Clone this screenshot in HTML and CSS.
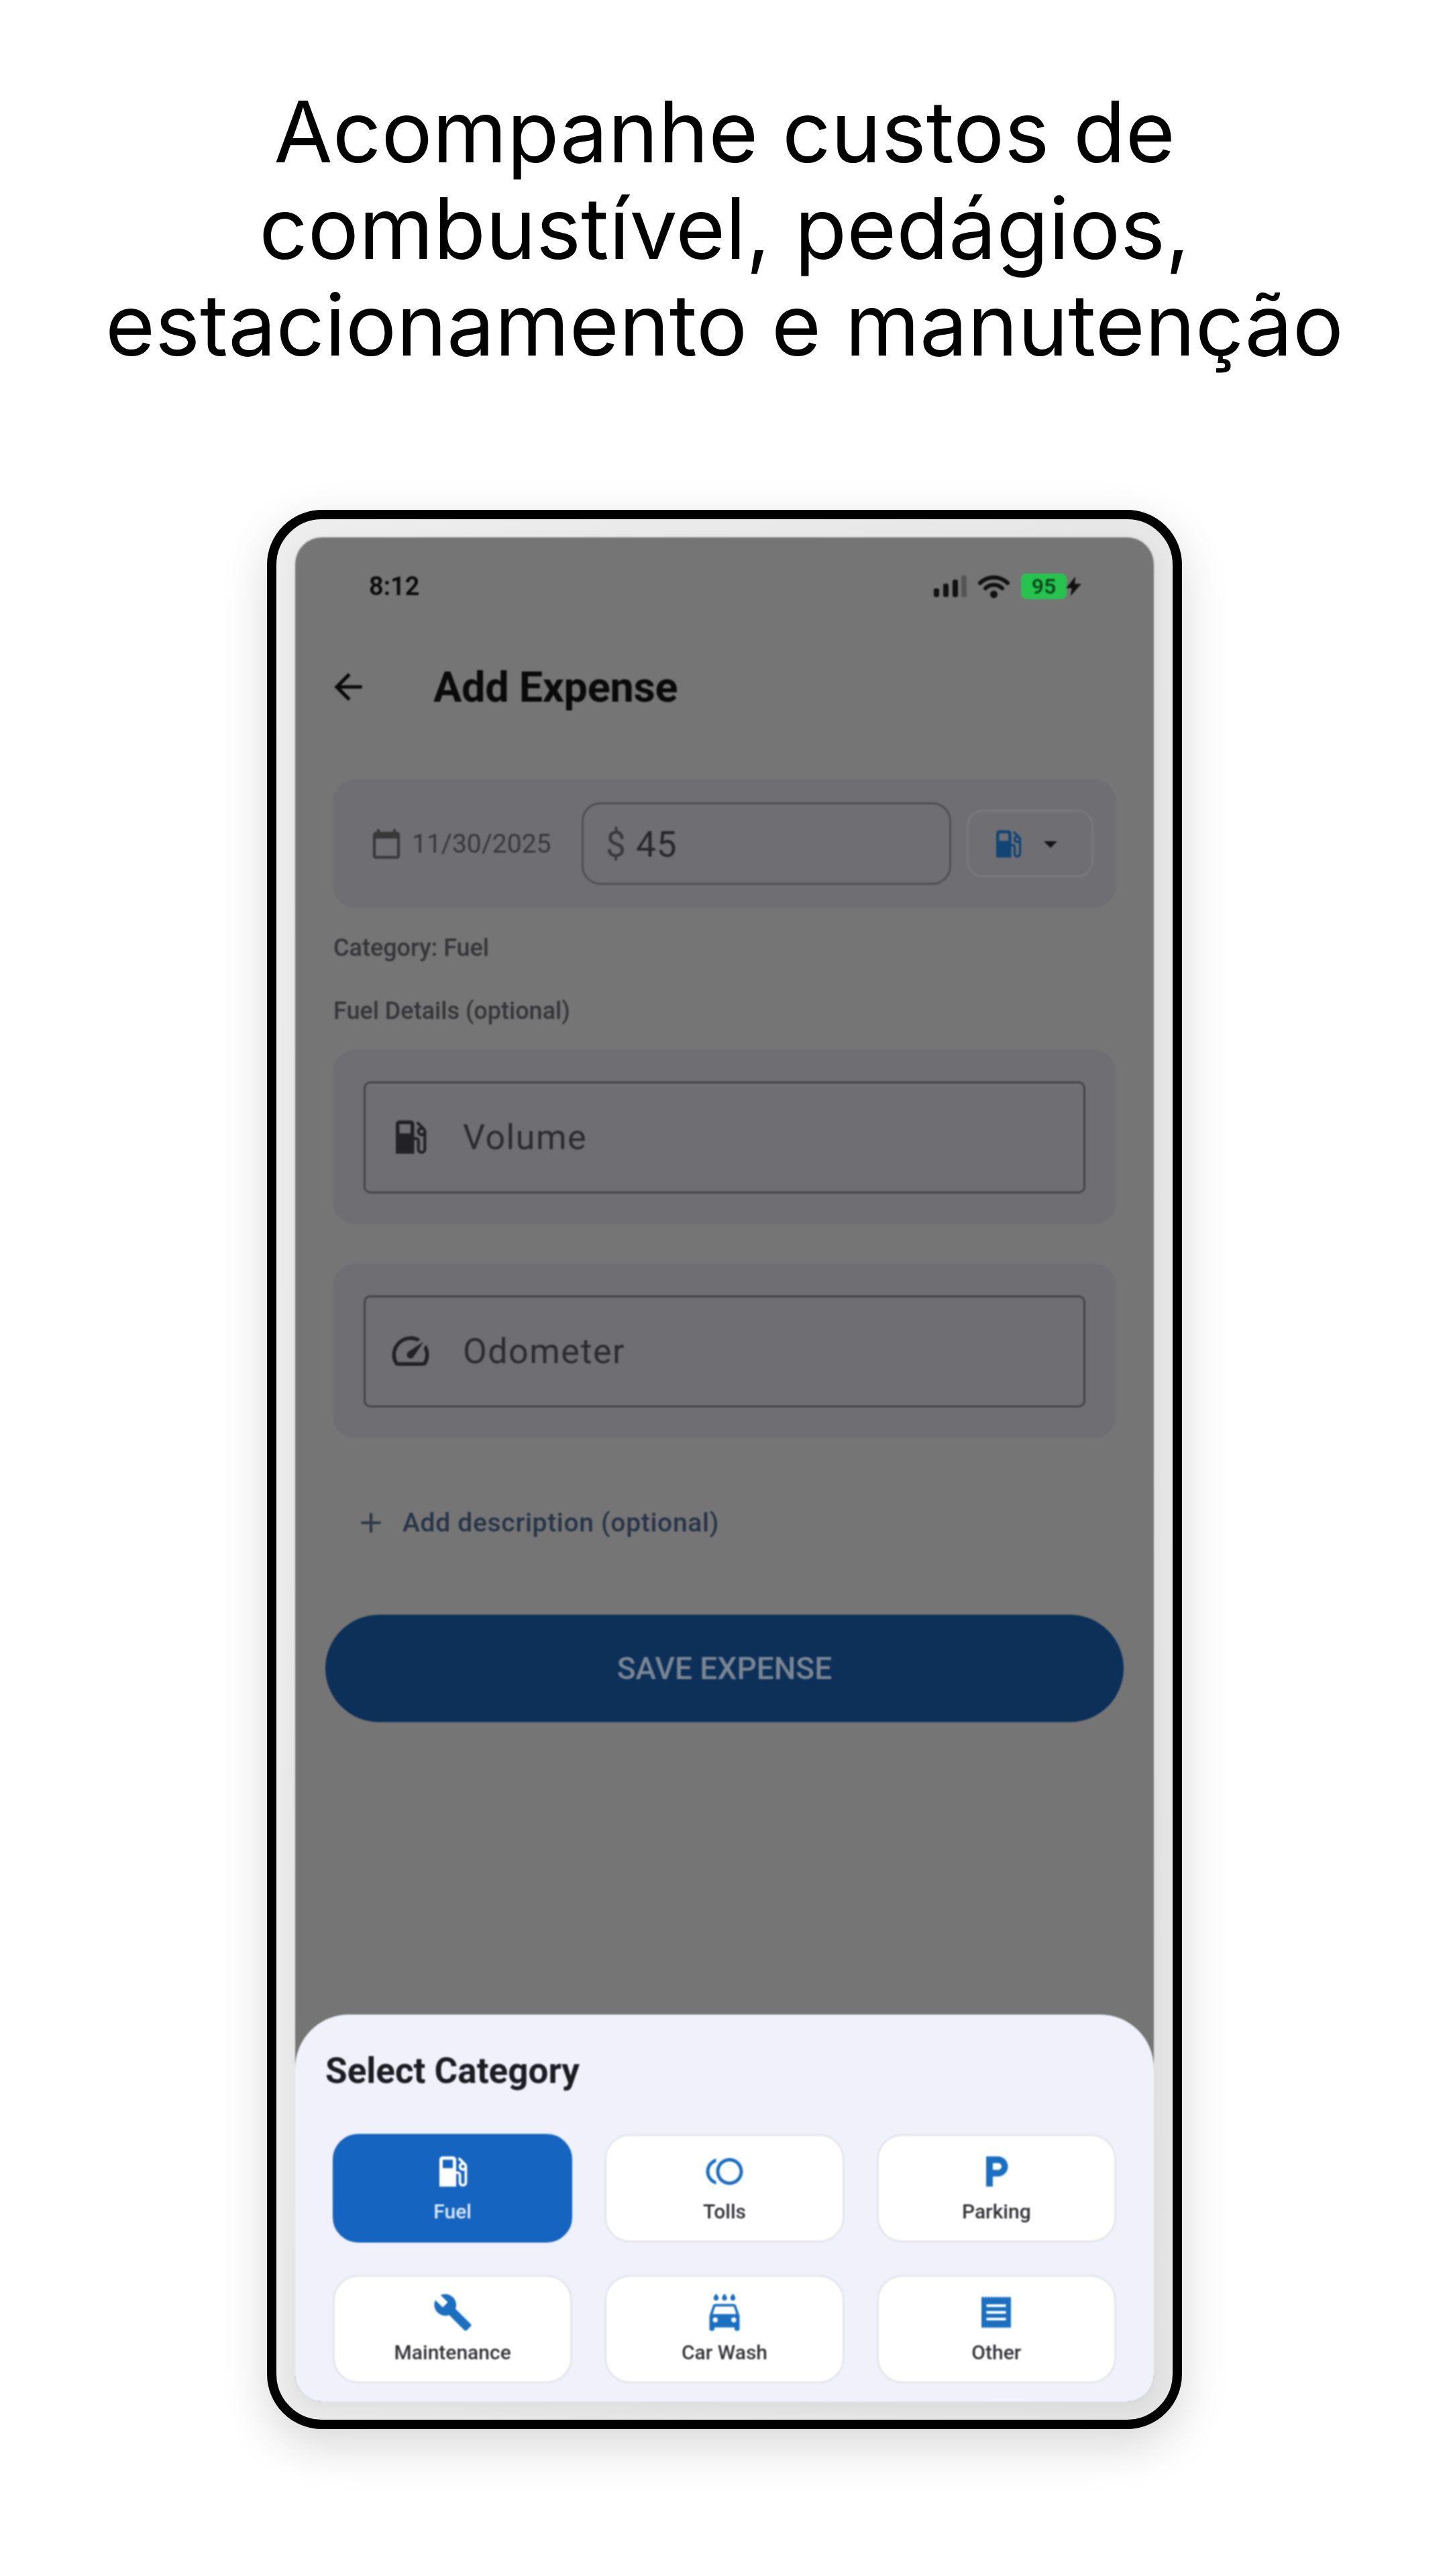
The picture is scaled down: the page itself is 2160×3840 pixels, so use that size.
FILE: index.html

```html
<!DOCTYPE html>
<html lang="pt">
<head>
  <meta charset="UTF-8">
  <title>Add Expense</title>
  <link rel="stylesheet" href="styles.css">
</head>
<body>

  <svg class="sprites" aria-hidden="true">
    <symbol id="i-fuel" viewBox="0 0 24 24"><path fill-rule="evenodd" d="M19.77 7.23l.01-.01-3.72-3.72L15 4.56l2.11 2.11c-.94.36-1.61 1.26-1.61 2.33 0 1.38 1.12 2.5 2.5 2.5.36 0 .69-.08 1-.21v7.21c0 .55-.45 1-1 1s-1-.45-1-1V14c0-1.1-.9-2-2-2h-1V5c0-1.1-.9-2-2-2H6c-1.1 0-2 .9-2 2v16h10v-7.5h1.5v5c0 1.38 1.12 2.5 2.5 2.5s2.5-1.12 2.5-2.5V9c0-.69-.28-1.32-.73-1.77zM12 10H6V5h6v5zm6 0c-.55 0-1-.45-1-1s.45-1 1-1 1 .45 1 1-.45 1-1 1z"/></symbol>
    <symbol id="i-toll" viewBox="0 0 24 24"><path d="M15 4c-4.42 0-8 3.58-8 8s3.58 8 8 8 8-3.58 8-8-3.58-8-8-8zm0 14c-3.31 0-6-2.69-6-6s2.69-6 6-6 6 2.69 6 6-2.69 6-6 6zM3 12c0-2.61 1.67-4.83 4-5.65V4.26C3.55 5.15 1 8.27 1 12s2.55 6.85 6 7.74v-2.09c-2.33-.82-4-3.04-4-5.65z"/></symbol>
    <symbol id="i-parking" viewBox="0 0 24 24"><path d="M13 3H6v18h4v-6h3c3.31 0 6-2.69 6-6s-2.69-6-6-6zm.2 8H10V7h3.2c1.1 0 2 .9 2 2s-.9 2-2 2z"/></symbol>
    <symbol id="i-wrench" viewBox="0 0 24 24"><path d="M22.7 19l-9.1-9.1c.9-2.3.4-5-1.5-6.9-2-2-5-2.4-7.4-1.3L9 6 6 9 1.6 4.7C.4 7.1.9 10.1 2.9 12.1c1.9 1.9 4.6 2.4 6.9 1.5l9.1 9.1c.4.4 1 .4 1.4 0l2.3-2.3c.5-.4.5-1.1.1-1.4z"/></symbol>
    <symbol id="i-carwash" viewBox="0 0 24 24"><path d="M17 5c.83 0 1.5-.67 1.5-1.5 0-1-1.5-2.7-1.5-2.7s-1.5 1.7-1.5 2.7c0 .83.67 1.5 1.5 1.5zm-5 0c.83 0 1.5-.67 1.5-1.5 0-1-1.5-2.7-1.5-2.7s-1.5 1.7-1.5 2.7c0 .83.67 1.5 1.5 1.5zM7 5c.83 0 1.5-.67 1.5-1.5C8.5 2.5 7 .8 7 .8S5.5 2.5 5.5 3.5C5.5 4.33 6.17 5 7 5zm11.92 3.01C18.72 7.42 18.16 7 17.5 7h-11c-.66 0-1.21.42-1.42 1.01L3 14v8c0 .55.45 1 1 1h1c.55 0 1-.45 1-1v-1h12v1c0 .55.45 1 1 1h1c.55 0 1-.45 1-1v-8l-2.08-5.99zM6.5 18c-.83 0-1.5-.67-1.5-1.5S5.67 15 6.5 15s1.5.67 1.5 1.5S7.33 18 6.5 18zm11 0c-.83 0-1.5-.67-1.5-1.5s.67-1.5 1.5-1.5 1.5.67 1.5 1.5-.67 1.5-1.5 1.5zM5 13l1.5-4.5h11L19 13H5z"/></symbol>
    <symbol id="i-receipt" viewBox="0 0 24 24"><path fill-rule="evenodd" d="M3.2 3.2l.88-.6.88.6.88-.6.88.6.88-.6.88.6.88-.6.88.6.88-.6.88.6.88-.6.88.6.88-.6.88.6.88-.6.88.6.88-.6.88.6.88-.6.88.6V20.8l-.88.6-.88-.6-.88.6-.88-.6-.88.6-.88-.6-.88.6-.88-.6-.88.6-.88-.6-.88.6-.88-.6-.88.6-.88-.6-.88.6-.88-.6-.88.6-.88-.6-.88.6-.88-.6zM6.2 7.2h11.6v1.6H6.2zM6.2 11.2h11.6v1.6H6.2zM6.2 15.2h11.6v1.6H6.2z"/></symbol>
    <symbol id="i-speed" viewBox="0 0 24 24"><path d="M20.38 8.57l-1.23 1.85a8 8 0 0 1-.22 7.58H5.07A8 8 0 0 1 15.58 6.85l1.85-1.23A10 10 0 0 0 3.35 19a2 2 0 0 0 1.72 1h13.85a2 2 0 0 0 1.74-1 10 10 0 0 0-.27-10.44zm-9.79 6.84a2 2 0 0 0 2.83 0l5.66-8.49-8.49 5.66a2 2 0 0 0 0 2.83z"/></symbol>
    <symbol id="i-calendar" viewBox="0 0 24 24"><path d="M20 3h-1V1h-2v2H7V1H5v2H4c-1.1 0-2 .9-2 2v16c0 1.1.9 2 2 2h16c1.1 0 2-.9 2-2V5c0-1.1-.9-2-2-2zm0 18H4V8h16v13z"/></symbol>
  </svg>

  <h1 class="headline">Acompanhe custos de<br>combustível, pedágios,<br>estacionamento e manutenção</h1>

  <div class="phone">
    <div class="screen">

      <!-- Status bar -->
      <div class="status-bar">
        <span class="clock">8:12</span>
        <div class="status-icons">
          <svg class="signal" viewBox="0 0 49 32">
            <rect x="0" y="19" width="8" height="13" rx="3"/>
            <rect x="14" y="12" width="8" height="20" rx="3"/>
            <rect x="28" y="6" width="8" height="26" rx="3"/>
            <rect class="signal-off" x="41" y="0" width="8" height="32" rx="3"/>
          </svg>
          <svg class="wifi" viewBox="0 0 47 35">
            <path d="M3 12 C15 1 32 1 44 12" />
            <path d="M11 20 C18 13 29 13 36 20" />
            <circle cx="23.5" cy="29" r="5.5"/>
          </svg>
          <span class="battery">95</span>
          <svg class="bolt" viewBox="0 0 23 27"><path d="M14 0 L1 16 H9 L7 27 L22 10 H13 Z"/></svg>
        </div>
      </div>

      <!-- App bar -->
      <div class="app-bar">
        <svg class="back" viewBox="0 0 24 24"><path d="M20 11H7.83l5.59-5.59L12 4l-8 8 8 8 1.41-1.41L7.83 13H20v-2z"/></svg>
        <span class="app-title">Add Expense</span>
      </div>

      <!-- Date, amount, category -->
      <div class="card amount-card">
        <svg class="date-icon"><use href="#i-calendar"/></svg>
        <span class="date">11/30/2025</span>
        <div class="amount"><span class="currency">$</span> 45</div>
        <div class="cat-select">
          <svg class="cat-icon"><use href="#i-fuel"/></svg>
          <svg class="caret" viewBox="0 0 24 24"><path d="M7 10l5 5 5-5z"/></svg>
        </div>
      </div>

      <p class="caption caption-first">Category: Fuel</p>
      <p class="caption caption-second">Fuel Details (optional)</p>

      <div class="card field-card field-card-first">
        <div class="field">
          <svg class="field-icon"><use href="#i-fuel"/></svg>
          <span>Volume</span>
        </div>
      </div>

      <div class="card field-card field-card-second">
        <div class="field">
          <svg class="field-icon"><use href="#i-speed"/></svg>
          <span>Odometer</span>
        </div>
      </div>

      <div class="add-desc">
        <svg class="plus" viewBox="0 0 24 24"><path d="M19 13h-6v6h-2v-6H5v-2h6V5h2v6h6v2z"/></svg>
        <span>Add description (optional)</span>
      </div>

      <div class="save-btn">SAVE EXPENSE</div>

      <!-- Bottom sheet -->
      <div class="sheet">
        <h2 class="sheet-title">Select Category</h2>
        <div class="tiles">
          <div class="tile selected"><svg class="tile-icon"><use href="#i-fuel"/></svg><span>Fuel</span></div>
          <div class="tile"><svg class="tile-icon"><use href="#i-toll"/></svg><span>Tolls</span></div>
          <div class="tile"><svg class="tile-icon"><use href="#i-parking"/></svg><span>Parking</span></div>
          <div class="tile"><svg class="tile-icon"><use href="#i-wrench"/></svg><span>Maintenance</span></div>
          <div class="tile"><svg class="tile-icon"><use href="#i-carwash"/></svg><span>Car Wash</span></div>
          <div class="tile"><svg class="tile-icon"><use href="#i-receipt"/></svg><span>Other</span></div>
        </div>
      </div>

    </div>
  </div>

</body>
</html>
```

FILE: styles.css

```css
html, body {
  margin: 0;
  padding: 0;
  background: #fff;
}

body {
  width: 2160px;
  height: 3840px;
  overflow: hidden;
  font-family: Roboto, sans-serif;
}

.sprites {
  display: none;
}

.headline {
  margin: 0;
  padding-top: 124px;
  height: 432px;
  font-family: Inter, sans-serif;
  font-size: 127px;
  font-weight: 400;
  line-height: 144px;
  text-align: center;
  color: #000;
}

.phone {
  box-sizing: border-box;
  width: 1364px;
  height: 2861px;
  margin: 204px auto 0;
  padding: 27px 28px;
  border: 14px solid #000;
  border-radius: 82px;
  background: linear-gradient(100deg, #ededed, #e4e4e4);
  box-shadow: 0 24px 70px rgba(0, 0, 0, 0.16);
}

.screen {
  display: flex;
  flex-direction: column;
  height: 100%;
  overflow: hidden;
  border-radius: 40px;
  background: #757575;
  box-shadow: 0 10px 28px rgba(0, 0, 0, 0.05);
  filter: blur(0.9px);
}

/* Status bar */
.status-bar {
  display: flex;
  align-items: center;
  justify-content: space-between;
  flex: none;
  height: 146px;
  padding: 0 107px 0 110px;
}

.clock {
  font-size: 38px;
  font-weight: 600;
  color: #0a0a0a;
}

.status-icons {
  display: flex;
  align-items: center;
}

.signal {
  width: 49px;
  height: 32px;
  fill: #111;
}

.signal-off {
  fill: #555;
}

.wifi {
  width: 47px;
  height: 35px;
  margin-left: 17px;
  fill: #111;
  stroke: none;
}

.wifi path {
  fill: none;
  stroke: #111;
  stroke-width: 6;
  stroke-linecap: round;
}

.battery {
  width: 68px;
  height: 38px;
  margin-left: 17px;
  border-radius: 8px;
  background: #26c44f;
  color: #0b4a1c;
  font-size: 32px;
  font-weight: 600;
  line-height: 38px;
  text-align: center;
}

.bolt {
  width: 25px;
  height: 30px;
  margin-left: -2px;
  fill: #111;
}

/* App bar */
.app-bar {
  display: flex;
  align-items: center;
  flex: none;
  height: 154px;
  padding-left: 48px;
}

.back {
  width: 62px;
  height: 62px;
  fill: #0a0a0a;
}

.app-title {
  margin-left: 96px;
  font-size: 63px;
  font-weight: 700;
  letter-spacing: -0.3px;
  color: #0a0a0a;
}

/* Cards */
.card {
  box-sizing: border-box;
  flex: none;
  margin: 0 56px;
  border-radius: 34px;
  background: #6f6f73;
}

.amount-card {
  display: flex;
  align-items: center;
  height: 191px;
  margin-top: 61px;
  padding-left: 56px;
}

.date-icon {
  width: 48px;
  height: 48px;
  fill: #38383b;
}

.date {
  width: 253px;
  margin-left: 14px;
  font-size: 39px;
  color: #38383c;
}

.amount {
  box-sizing: border-box;
  display: flex;
  align-items: center;
  width: 551px;
  height: 123px;
  padding: 3px 0 0 33px;
  border: 3px solid #505054;
  border-radius: 28px;
  font-size: 53px;
  color: #28282c;
  white-space: pre;
  letter-spacing: 1px;
}

.currency {
  color: #3a3a3e;
}

.cat-select {
  box-sizing: border-box;
  display: flex;
  align-items: center;
  width: 189px;
  height: 101px;
  margin-left: 23px;
  padding-left: 32px;
  border: 3px solid #79797d;
  border-radius: 24px;
}

.cat-icon {
  width: 54px;
  height: 54px;
  fill: #104476;
}

.caret {
  width: 48px;
  height: 48px;
  margin-left: 12px;
  fill: #141416;
}

.caption {
  flex: none;
  height: 44px;
  margin: 0 57px;
  font-size: 36px;
  font-weight: 500;
  line-height: 44px;
  color: #363639;
}

.caption-first {
  margin-top: 38px;
}

.caption-second {
  margin-top: 50px;
}

.field-card {
  display: flex;
  align-items: center;
  height: 260px;
  padding: 0 46px;
}

.field-card-first {
  margin-top: 36px;
}

.field-card-second {
  margin-top: 59px;
}

.field {
  box-sizing: border-box;
  display: flex;
  align-items: center;
  width: 100%;
  height: 167px;
  padding-left: 34px;
  border: 3px solid #46464a;
  border-radius: 10px;
  font-size: 52px;
  letter-spacing: 1.5px;
  color: #2b2b30;
}

.field-icon {
  width: 66px;
  height: 66px;
  margin-right: 45px;
  fill: #222226;
}

.add-desc {
  display: flex;
  align-items: center;
  flex: none;
  height: 50px;
  margin-top: 101px;
  padding-left: 88px;
  font-size: 39px;
  font-weight: 500;
  letter-spacing: 0.7px;
  color: #273447;
}

.plus {
  width: 50px;
  height: 50px;
  margin-right: 22px;
  fill: #2f3a48;
}

.save-btn {
  flex: none;
  height: 160px;
  margin: 112px 45px 0;
  border-radius: 80px;
  background: #0c3058;
  font-size: 46px;
  font-weight: 500;
  line-height: 160px;
  text-align: center;
  color: #7a8593;
}

/* Bottom sheet */
.sheet {
  box-sizing: border-box;
  flex: none;
  height: 577px;
  margin-top: auto;
  padding-top: 54px;
  border-radius: 80px 80px 40px 40px;
  background: #f0f1fa;
}

.sheet-title {
  height: 60px;
  margin: 0 45px;
  font-size: 53px;
  font-weight: 700;
  line-height: 60px;
  color: #1c1c22;
}

.tiles {
  display: grid;
  grid-template-columns: repeat(3, 1fr);
  grid-auto-rows: 162px;
  gap: 48px;
  margin: 64px 56px 0;
}

.tile {
  box-sizing: border-box;
  display: flex;
  flex-direction: column;
  align-items: center;
  justify-content: center;
  padding-bottom: 4px;
  border: 3px solid #e6e6ec;
  border-radius: 38px;
  background: #fff;
  font-size: 30px;
  font-weight: 500;
  color: #333337;
}

.tile-icon {
  width: 60px;
  height: 60px;
  margin-bottom: 12px;
  fill: #1a6fc0;
}

.tile.selected {
  border-color: #1565c0;
  background: #1565c0;
  color: #dbe8f7;
}

.tile.selected .tile-icon {
  fill: #fff;
}
```
